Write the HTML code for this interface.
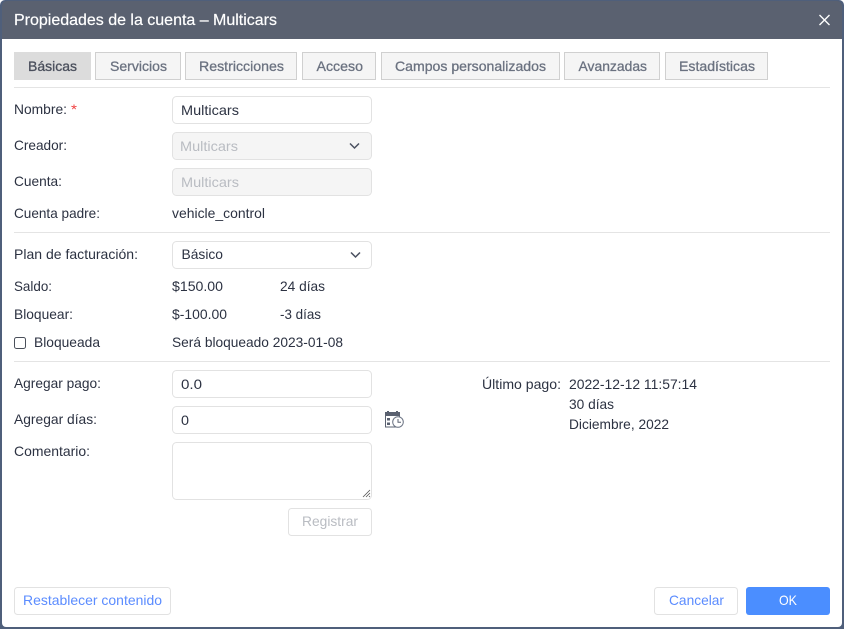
<!DOCTYPE html>
<html lang="es">
<head>
<meta charset="utf-8">
<title>Propiedades de la cuenta – Multicars</title>
<style>
html,body{margin:0;padding:0;width:844px;height:629px;overflow:hidden;background:#fff}
svg{display:block}
text{font-family:"Liberation Sans",sans-serif;font-size:14px;fill:#2c3242;white-space:pre}
.tab{fill:#f5f5f5;stroke:#d0d0d0}
.tt{fill:#6b7280;font-size:14px;stroke:#6b7280;stroke-width:.3px}
.in{fill:#fff;stroke:#e2e2e2}
.dis{fill:#f5f5f5;stroke:#e2e2e2}
.g{fill:#b9bcc2}
.hr{fill:#e4e4e4}
.lnk{fill:#5b8cff}
</style>
</head>
<body>
<svg xmlns="http://www.w3.org/2000/svg" width="844" height="629" viewBox="0 0 844 629">
<rect x="0" y="0" width="844" height="629" fill="#fff"/>
<path d="M0 629V5a5 5 0 0 1 5-5H839a5 5 0 0 1 5 5V629Z" fill="#4f5f7b"/>
<path d="M2 39H842V623a4 4 0 0 1-4 4H6a4 4 0 0 1-4-4Z" fill="#fff"/>
<path d="M2 39V6a5 5 0 0 1 5-5H837a5 5 0 0 1 5 5V39Z" fill="#5a6170"/>
<text x="14" y="25" style="font-size:16px;fill:#fff;stroke:#fff;stroke-width:.2px" textLength="263" lengthAdjust="spacingAndGlyphs">Propiedades de la cuenta – Multicars</text>
<path d="M819.5 15L829.5 25M829.5 15L819.5 25" stroke="#fff" stroke-width="1.4" fill="none"/>

<rect x="14" y="52" width="77" height="28" fill="#dcdcdc"/>
<text x="28" y="71" class="tt" style="fill:#4a4f5c;stroke:#4a4f5c" textLength="49" lengthAdjust="spacingAndGlyphs">Básicas</text>
<rect class="tab" x="95.5" y="52.5" width="85" height="27"/>
<text x="110" y="71" class="tt" textLength="57" lengthAdjust="spacingAndGlyphs">Servicios</text>
<rect class="tab" x="185.5" y="52.5" width="111" height="27"/>
<text x="199" y="71" class="tt" textLength="85" lengthAdjust="spacingAndGlyphs">Restricciones</text>
<rect class="tab" x="302.5" y="52.5" width="73" height="27"/>
<text x="316.5" y="71" class="tt" textLength="46.5" lengthAdjust="spacingAndGlyphs">Acceso</text>
<rect class="tab" x="381.5" y="52.5" width="178" height="27"/>
<text x="395" y="71" class="tt" textLength="151" lengthAdjust="spacingAndGlyphs">Campos personalizados</text>
<rect class="tab" x="564.5" y="52.5" width="95" height="27"/>
<text x="578.5" y="71" class="tt" textLength="68.5" lengthAdjust="spacingAndGlyphs">Avanzadas</text>
<rect class="tab" x="665.5" y="52.5" width="102" height="27"/>
<text x="679" y="71" class="tt" textLength="76" lengthAdjust="spacingAndGlyphs">Estadísticas</text>

<rect class="hr" x="14" y="87" width="816" height="1"/>
<rect class="hr" x="14" y="232" width="816" height="1"/>
<rect class="hr" x="14" y="361" width="816" height="1"/>

<text x="14" y="114" textLength="53" lengthAdjust="spacingAndGlyphs">Nombre:</text>
<text x="71" y="114" style="fill:#f04040" textLength="6" lengthAdjust="spacingAndGlyphs">*</text>
<rect class="in" x="172.5" y="96.5" width="199" height="27" rx="4"/>
<text x="181" y="115" textLength="58" lengthAdjust="spacingAndGlyphs">Multicars</text>

<text x="14" y="150" textLength="53" lengthAdjust="spacingAndGlyphs">Creador:</text>
<rect class="dis" x="172.5" y="132.5" width="199" height="27" rx="4"/>
<text x="180" y="151" class="g" textLength="58" lengthAdjust="spacingAndGlyphs">Multicars</text>
<path d="M350 143.5L354.5 148L359 143.5" fill="none" stroke="#4a5060" stroke-width="1.5"/>

<text x="14" y="186" textLength="48" lengthAdjust="spacingAndGlyphs">Cuenta:</text>
<rect class="dis" x="172.5" y="168.5" width="199" height="27" rx="4"/>
<text x="181" y="187" class="g" textLength="58" lengthAdjust="spacingAndGlyphs">Multicars</text>

<text x="14" y="218" textLength="86" lengthAdjust="spacingAndGlyphs">Cuenta padre:</text>
<text x="172" y="218" textLength="93" lengthAdjust="spacingAndGlyphs">vehicle_control</text>

<text x="14" y="259" textLength="124" lengthAdjust="spacingAndGlyphs">Plan de facturación:</text>
<rect class="in" x="172.5" y="241.5" width="199" height="27" rx="4"/>
<text x="181.5" y="259" textLength="41.5" lengthAdjust="spacingAndGlyphs">Básico</text>
<path d="M351 252.5L355.5 257L360 252.5" fill="none" stroke="#4a5060" stroke-width="1.5"/>

<text x="14" y="291" textLength="38" lengthAdjust="spacingAndGlyphs">Saldo:</text>
<text x="172" y="291" textLength="51" lengthAdjust="spacingAndGlyphs">$150.00</text>
<text x="280" y="291" textLength="45" lengthAdjust="spacingAndGlyphs">24 días</text>

<text x="14" y="319" textLength="59" lengthAdjust="spacingAndGlyphs">Bloquear:</text>
<text x="172" y="319" textLength="55" lengthAdjust="spacingAndGlyphs">$-100.00</text>
<text x="280" y="319" textLength="41" lengthAdjust="spacingAndGlyphs">-3 días</text>

<rect x="14.5" y="337.5" width="11" height="11" rx="2" fill="#fff" stroke="#4a4f5a"/>
<text x="34" y="347" textLength="66" lengthAdjust="spacingAndGlyphs">Bloqueada</text>
<text x="172" y="347" textLength="171" lengthAdjust="spacingAndGlyphs">Será bloqueado 2023-01-08</text>

<text x="14" y="388" textLength="87" lengthAdjust="spacingAndGlyphs">Agregar pago:</text>
<rect class="in" x="172.5" y="370.5" width="199" height="27" rx="4"/>
<text x="181" y="389" textLength="21" lengthAdjust="spacingAndGlyphs">0.0</text>

<text x="14" y="424" textLength="83" lengthAdjust="spacingAndGlyphs">Agregar días:</text>
<rect class="in" x="172.5" y="406.5" width="199" height="27" rx="4"/>
<text x="181" y="425" textLength="8" lengthAdjust="spacingAndGlyphs">0</text>

<g>
<rect x="385.5" y="414" width="14" height="13" fill="#fff" stroke="#5a6170"/>
<rect x="385" y="412" width="15" height="4" fill="#5a6170"/>
<rect x="387" y="411" width="2" height="2" fill="#5a6170"/>
<rect x="396" y="411" width="2" height="2" fill="#5a6170"/>
<rect x="387" y="418" width="3" height="2.5" fill="#5a6170"/>
<rect x="387" y="422.5" width="3" height="2.5" fill="#5a6170"/>
<circle cx="398" cy="422" r="5.3" fill="#fff" stroke="#6c7484" stroke-width="1"/>
<path d="M398 419V422.3H401" fill="none" stroke="#5a6170" stroke-width="1"/>
</g>

<text x="14" y="456" textLength="76" lengthAdjust="spacingAndGlyphs">Comentario:</text>
<rect class="in" x="172.5" y="442.5" width="199" height="57" rx="4"/>
<path d="M363 497L370 490M366 497L370 493M369 497L370 496" stroke="#555" stroke-width="0.8" fill="none"/>

<rect x="288.5" y="508.5" width="83" height="27" rx="3" fill="#fff" stroke="#e2e2e2"/>
<text x="302" y="526" class="g" textLength="56" lengthAdjust="spacingAndGlyphs">Registrar</text>

<text x="482" y="389" textLength="79" lengthAdjust="spacingAndGlyphs">Último pago:</text>
<text x="569" y="389" textLength="128" lengthAdjust="spacingAndGlyphs">2022-12-12 11:57:14</text>
<text x="569" y="409" textLength="45" lengthAdjust="spacingAndGlyphs">30 días</text>
<text x="569" y="429" textLength="100" lengthAdjust="spacingAndGlyphs">Diciembre, 2022</text>

<rect x="14.5" y="587.5" width="156" height="27" rx="3" fill="#fff" stroke="#e2e2e2"/>
<text x="23" y="605" class="lnk" textLength="139" lengthAdjust="spacingAndGlyphs">Restablecer contenido</text>
<rect x="654.5" y="587.5" width="83" height="27" rx="3" fill="#fff" stroke="#e2e2e2"/>
<text x="669" y="605" class="lnk" textLength="55" lengthAdjust="spacingAndGlyphs">Cancelar</text>
<rect x="746" y="587" width="84" height="28" rx="3" fill="#4b8eff"/>
<text x="779" y="605" style="fill:#fff" textLength="18" lengthAdjust="spacingAndGlyphs">OK</text>
</svg>
</body>
</html>
